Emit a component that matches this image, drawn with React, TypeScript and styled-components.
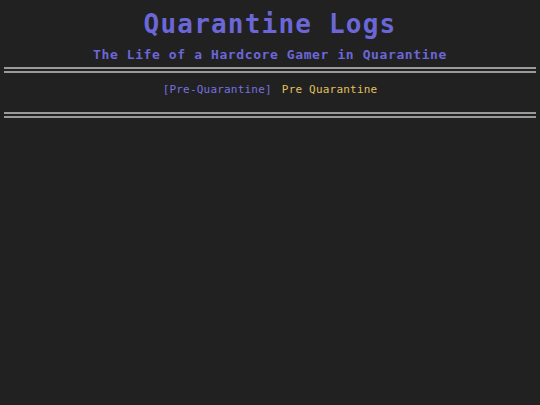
import React from "react";
import styled, { createGlobalStyle } from "styled-components";

const GlobalStyle = createGlobalStyle`
  html, body {
    margin: 0;
    padding: 0;
    background-color: #212121;
    min-height: 100%;
  }
  body {
    font-family: "DejaVu Sans Mono", "Liberation Mono", monospace;
  }
`;

const Page = styled.div`
  min-height: 405px;
  padding: 0 4px;
  box-sizing: border-box;
`;

const Header = styled.header`
  padding-top: 8px;
  text-align: center;
`;

const Title = styled.h1`
  margin: 0;
  font-size: 26px;
  line-height: 32px;
  font-weight: bold;
  color: #6b67d8;
  letter-spacing: 1.2px;
`;

const Subtitle = styled.h2`
  margin: 6px 0 3px;
  font-size: 13px;
  line-height: 18px;
  font-weight: bold;
  color: #6b67d8;
  letter-spacing: 0.6px;
`;

const Rule = styled.hr`
  margin: 0;
  height: 2px;
  border: 0;
  border-top: 2px solid #9a9a9a;
  border-bottom: 2px solid #9a9a9a;
  box-sizing: content-box;
`;

const PostList = styled.div`
  display: flex;
  flex-direction: column;
  align-items: center;
  padding: 10px 0 15px;
`;

const PostRow = styled.div`
  display: flex;
  gap: 10px;
  font-size: 11px;
  line-height: 14px;
  letter-spacing: 0.2px;
`;

const Tag = styled.span`
  color: #7770e0;
`;

const PostLink = styled.a`
  color: #e3c05e;
  text-decoration: none;
`;

const posts = [{ tag: "Pre-Quarantine", title: "Pre Quarantine" }];

export default function App() {
  return (
    <Page>
      <GlobalStyle />
      <Header>
        <Title>Quarantine Logs</Title>
        <Subtitle>The Life of a Hardcore Gamer in Quarantine</Subtitle>
      </Header>
      <Rule />
      <PostList>
        {posts.map((p) => (
          <PostRow key={p.title}>
            <Tag>[{p.tag}]</Tag>
            <PostLink href="#">{p.title}</PostLink>
          </PostRow>
        ))}
      </PostList>
      <Rule />
    </Page>
  );
}
